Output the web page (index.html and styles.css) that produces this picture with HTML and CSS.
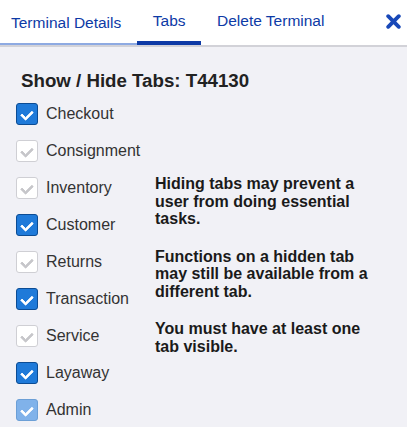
FILE: index.html
```html
<!DOCTYPE html>
<html lang="en">
<head>
  <meta charset="UTF-8" />
  <meta name="viewport" content="width=device-width, initial-scale=1.0"/>
  <title>Terminal Tabs</title>
  <link rel="stylesheet" href="styles.css">
</head>
<body>
  <div class="header">
    <nav class="tabs">
      <a class="tab tab-prev" href="#">Terminal Details</a>
      <a class="tab tab-active" href="#">Tabs</a>
      <a class="tab" href="#">Delete Terminal</a>
    </nav>
    <button class="close" type="button" aria-label="Close">
      <svg width="15" height="15" viewBox="0 0 15 15">
        <path d="M2.2 2.2 L12.8 12.8 M12.8 2.2 L2.2 12.8" stroke="#1848b8" stroke-width="3.8" stroke-linecap="round"/>
      </svg>
    </button>
  </div>

  <div class="content">
    <h2>Show / Hide Tabs: T44130</h2>
    <div class="panel">
      <ul class="tab-list">
        <li><span class="box on"></span>Checkout</li>
        <li><span class="box"></span>Consignment</li>
        <li><span class="box"></span>Inventory</li>
        <li><span class="box on"></span>Customer</li>
        <li><span class="box"></span>Returns</li>
        <li><span class="box on"></span>Transaction</li>
        <li><span class="box"></span>Service</li>
        <li><span class="box on"></span>Layaway</li>
        <li><span class="box locked"></span>Admin</li>
      </ul>
      <div class="notes">
        <p>Hiding tabs may prevent a user from doing essential tasks.</p>
        <p>Functions on a hidden tab may still be available from a different tab.</p>
        <p>You must have at least one tab visible.</p>
      </div>
    </div>
  </div>
</body>
</html>
```

FILE: styles.css
```css
:root {
  --azul: #0d3aa6;
  --azul-claro: #8eaae2;
  --fondo: #f1f1f6;
  --texto: #222222;
}

body {
  margin: 0;
  background: var(--fondo);
  font-family: "Liberation Sans", Arial, sans-serif;
  color: var(--texto);
}

.header {
  background: #ffffff;
  height: 45px;
  border-bottom: 2px solid #d2d2d8;
  display: flex;
  justify-content: space-between;
  align-items: stretch;
}

.tabs {
  display: flex;
  margin-left: -5px;
}

.tab {
  padding: 0 15.5px 0 16px;
  display: flex;
  align-items: center;
  font-size: 15.5px;
  color: var(--azul);
  text-decoration: none;
  border-bottom: 4px solid transparent;
  padding-top: 1px;
}

.tab-prev {
  border-bottom: 2px solid var(--azul-claro);
  padding-top: 3px;
}

.tab-active {
  border-bottom-color: var(--azul);
}

.close {
  background: none;
  border: none;
  padding: 0 6px 0 0;
  margin-top: 0;
  cursor: pointer;
}

.content {
  padding: 23px 0 0 16px;
}

h2 {
  margin: 0 0 4px 5px;
  font-size: 18.7px;
  line-height: 21px;
  font-weight: bold;
}

.panel {
  display: flex;
  align-items: center;
}

.tab-list {
  list-style: none;
  margin: 0;
  padding: 0;
  width: 139px;
  flex-shrink: 0;
}

.tab-list li {
  height: 37px;
  display: flex;
  align-items: center;
  gap: 8px;
  font-size: 16px;
  color: #333;
}

.box {
  width: 20px;
  height: 20px;
  border: 1px solid #cfcfd4;
  border-radius: 3px;
  background: #ffffff;
  position: relative;
  flex-shrink: 0;
}

.box::after {
  content: "";
  position: absolute;
  left: 6px;
  top: 4px;
  width: 5px;
  height: 9px;
  border: solid #c6c6ca;
  border-width: 0 3px 3px 0;
  border-radius: 1px;
  transform: rotate(45deg);
}

.box.on {
  background: #1f7ad9;
  border-color: #0c4c94;
}

.box.on::after,
.box.locked::after {
  border-color: #ffffff;
}

.box.locked {
  background: #80b2ea;
  border-color: #6c9fd6;
}

.notes {
  font-size: 16px;
  font-weight: bold;
  line-height: 17.5px;
  color: #1a1a1a;
  width: 228px;
  padding-top: 7px;
}

.notes p {
  margin: 0 0 20px;
}

.notes p:last-child {
  margin-bottom: 0;
}
```
